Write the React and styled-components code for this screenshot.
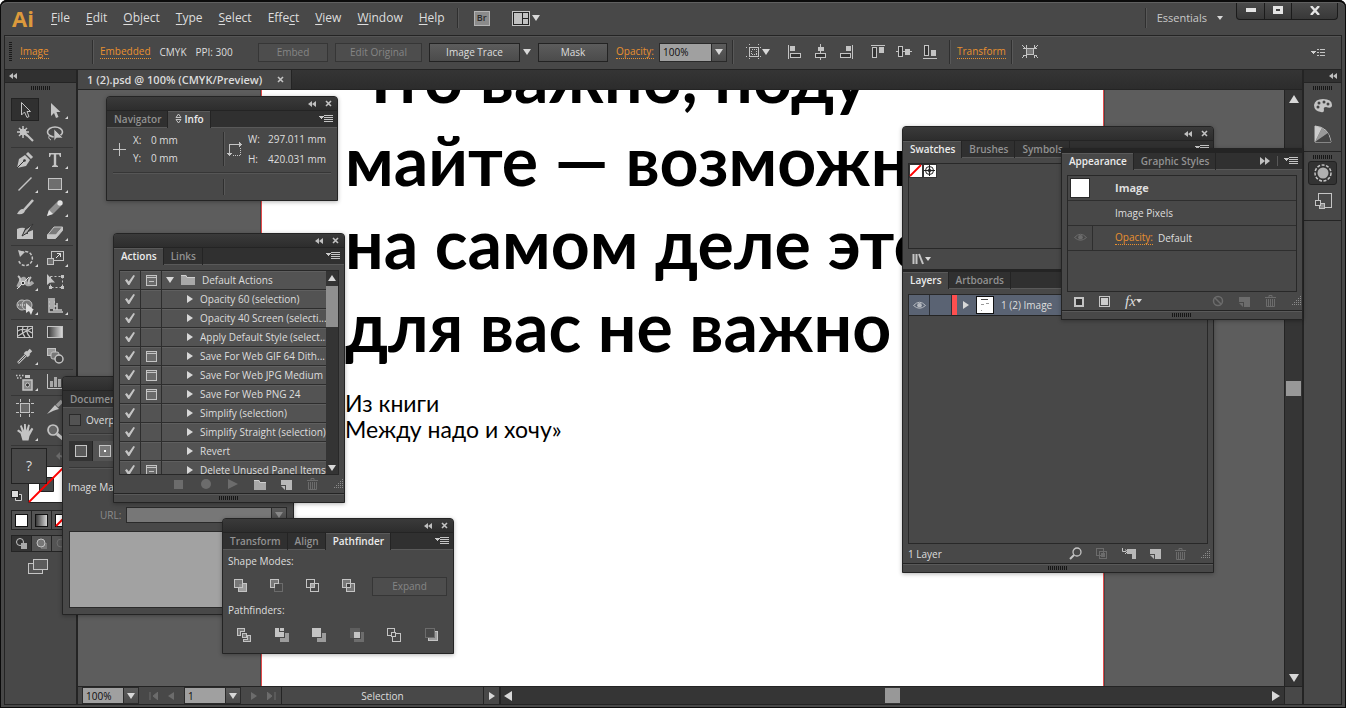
import React from "react";
import styled, { createGlobalStyle } from "styled-components";

const c = {
  base: "#484848",
  dark: "#303030",
  line: "#242424",
  soft: "#595959",
  text: "#dedede",
  dim: "#8c8c8c",
  off: "#6c6c6c",
  orange: "#e8902f",
  field: "#a0a0a0",
  icon: "#c4c4c4",
};

const GlobalStyle = createGlobalStyle`
  * { box-sizing: border-box; }
  body { margin: 0; background: #fff; }
  body, button, input, select, textarea {
    font-family: "Open Sans", "Noto Sans", sans-serif;
    font-size: 10px;
    line-height: 14px;
    color: ${c.text};
  }
  button { border: 0; padding: 0; background: none; cursor: pointer; white-space: nowrap; }
  svg { display: block; flex: none; }
`;

/* ---------- frame ---------- */

const Frame = styled.div`
  position: relative;
  display: flex;
  flex-direction: column;
  height: 100vh;
  min-height: 660px;
  padding: 3px 4px 3px;
  overflow: hidden;
  background: ${c.base};
  border-radius: 7px 7px 0 0;
  box-shadow: inset 0 0 0 1px #0b0b0b, inset 0 2px 0 #0b0b0b, inset 0 3px 0 #606060;
`;

const MenuBar = styled.header`
  display: flex;
  align-items: center;
  height: 32px;
  padding: 0 0 2px 8px;
`;

const Logo = styled.span`
  width: 31px;
  font-size: 22px;
  line-height: 28px;
  font-weight: 700;
  color: #dc9a3c;
`;

const MenuNav = styled.nav`
  display: flex;
  padding-right: 4px;
`;

const MenuButton = styled.button`
  padding: 4px 8px;
  font-size: 12px;
  line-height: 20px;
  u { text-underline-offset: 2px; }
`;

const Rule = styled.span`
  flex: none;
  width: 2px;
  height: ${(p) => p.$h || 20}px;
  background: linear-gradient(90deg, #2f2f2f 50%, #585858 50%);
`;

const MenuTools = styled.div`
  display: flex;
  align-items: center;
  gap: 22px;
  padding-left: 15px;
`;

const BridgeButton = styled.button`
  width: 16px;
  height: 15px;
  border: 1px solid #b4b4b4;
  background: #8b8b8b;
  color: #2a2a2a;
  font-size: 9px;
  line-height: 12px;
  font-weight: 600;
`;

const IconButton = styled.button`
  display: inline-flex;
  align-items: center;
  justify-content: center;
  gap: ${(p) => p.$gap || 0}px;
`;

const Grow = styled.span`
  flex: 1;
`;

const Workspaces = styled.button`
  display: flex;
  align-items: center;
  gap: 10px;
  padding: 0 13px 0 10px;
  font-size: 11px;
  line-height: 20px;
  color: #c9c9c9;
`;

const WindowButtons = styled.div`
  display: flex;
  align-self: flex-start;
  height: 17px;
  margin-right: 4px;
  border: 1px solid #1b1b1b;
  border-top: 0;
  border-radius: 0 0 4px 4px;
  background: linear-gradient(#4a4a4a, #383838);
`;

const WindowButton = styled.button`
  display: flex;
  align-items: center;
  justify-content: center;
  width: ${(p) => p.$w}px;
  padding-bottom: 2px;
  & + & { border-left: 1px solid #1b1b1b; }
`;

const Workspace = styled.div`
  flex: 1;
  min-height: 0;
  display: flex;
  flex-direction: column;
  border: 1px solid ${c.line};
`;

/* ---------- control bar ---------- */

const ControlBar = styled.div`
  display: flex;
  align-items: center;
  height: 34px;
  border-top: 1px solid #555;
  border-bottom: 1px solid ${c.line};
  padding: 0 16px 2px 4px;
`;

const Slot = styled.div`
  display: flex;
  align-items: center;
  flex: none;
  gap: ${(p) => p.$gap || 0}px;
  width: ${(p) => (p.$w ? p.$w + "px" : "auto")};
  padding-left: ${(p) => p.$pad || 0}px;
`;

const GripV = styled.span`
  width: 3px;
  height: 20px;
  background: repeating-linear-gradient(#1a1a1a 0 1px, transparent 1px 2px);
`;

const GripH = styled.span`
  width: 20px;
  height: 4px;
  background: repeating-linear-gradient(90deg, #161616 0 1px, transparent 1px 2px);
`;

const DottedLink = styled.a`
  color: ${c.orange};
  text-decoration: none;
  line-height: 13px;
  border-bottom: 1px dotted ${c.orange};
`;

const PushButton = styled.button`
  flex: none;
  width: ${(p) => p.$w}px;
  height: 19px;
  padding-bottom: 1px;
  border: 1px solid ${(p) => (p.disabled ? "#363636" : "#232323")};
  background: ${(p) => (p.disabled ? "#4d4d4d" : "linear-gradient(#5c5c5c, #4b4b4b)")};
  color: ${(p) => (p.disabled ? "#858585" : c.text)};
`;

const Combo = styled.span`
  display: flex;
  flex: none;
  width: ${(p) => p.$w}px;
  height: ${(p) => p.$h || 19}px;
  border: 1px solid #2a2a2a;
`;

const ComboSelect = styled.select`
  appearance: none;
  flex: 1;
  min-width: 0;
  border: 0;
  border-radius: 0;
  padding: 0 3px;
  background: ${(p) => (p.disabled ? "#777" : c.field)};
  color: #0c0c0c;
  opacity: 1;
`;

const ComboArrow = styled.span`
  display: flex;
  align-items: center;
  justify-content: center;
  width: 15px;
  border-left: 1px solid #2a2a2a;
  background: linear-gradient(#5c5c5c, #4b4b4b);
`;

/* ---------- main area ---------- */

const Main = styled.div`
  flex: 1;
  min-height: 0;
  display: flex;
`;

const Dock = styled.aside`
  flex: none;
  display: flex;
  flex-direction: column;
  width: ${(p) => p.$w}px;
  border-${(p) => p.$side}: 2px solid ${c.line};
`;

const DockHead = styled.div`
  display: flex;
  justify-content: ${(p) => (p.$right ? "flex-end" : "flex-start")};
  align-items: center;
  height: 13px;
  padding: 0 4px;
  background: ${c.dark};
  border-bottom: 1px solid ${c.line};
`;

const DockGrip = styled.div`
  display: flex;
  justify-content: center;
  align-items: center;
  height: 9px;
`;

const Tools = styled.div`
  padding: 6px 3px 0 6px;
`;

const ToolGroup = styled.div`
  display: grid;
  grid-template-columns: 30px 30px;
  grid-auto-rows: 24px;
  border-bottom: 1px solid #363636;
  padding-bottom: 1px;
`;

const ToolButton = styled.button`
  position: relative;
  display: flex;
  align-items: center;
  justify-content: center;
  width: 28px;
  height: 23px;
  background: ${(p) => (p.$on ? "#303030" : "none")};
  border: 1px solid ${(p) => (p.$on ? "#222" : "transparent")};
  &::after {
    content: "";
    position: absolute;
    right: 0;
    bottom: 1px;
    border-left: 3px solid transparent;
    border-bottom: 3px solid ${(p) => (p.$more ? "#d8d8d8" : "transparent")};
  }
`;

const SwatchPad = styled.div`
  padding: 2px 0 6px;
`;

const Strip3 = styled.div`
  display: flex;
  width: 61px;
  margin-bottom: 5px;
  border: 1px solid ${c.line};
`;

const StripButton = styled.button`
  display: flex;
  align-items: center;
  justify-content: center;
  flex: 1;
  height: ${(p) => p.$h}px;
  background: ${(p) => (p.$on ? "#333" : "#545454")};
  & + & { border-left: 1px solid ${c.line}; }
`;

const Doc = styled.main`
  flex: 1;
  min-width: 0;
  display: flex;
  flex-direction: column;
`;

const DocTabs = styled.div`
  display: flex;
  height: 20px;
  background: linear-gradient(#353535, #2c2c2c);
  border-bottom: 1px solid ${c.line};
`;

const DocTab = styled.button`
  display: flex;
  align-items: center;
  gap: 15px;
  padding: 0 7px 0 9px;
  background: ${c.base};
  border-right: 1px solid ${c.line};
  font-size: 11px;
  font-weight: 600;
  color: #dcdcdc;
`;

const CanvasRow = styled.div`
  flex: 1;
  min-height: 0;
  display: flex;
`;

const Canvas = styled.div`
  flex: 1;
  min-width: 0;
  overflow: hidden;
  background: #5d5d5d;
  padding-left: 183px;
`;

const Artboard = styled.article`
  width: 843px;
  height: 100%;
  overflow: hidden;
  background: #fff;
  border: solid #e34b4b;
  border-width: 0 1px;
  box-shadow: 0 0 0 1px #464646;
  padding-left: 83px;
  font-family: Lato, "Open Sans", sans-serif;
  color: #000;
  white-space: nowrap;
`;

const Headline = styled.h1`
  margin: -55px 0 23px;
  font-size: 68px;
  line-height: 83px;
  font-weight: 700;
`;

const Caption = styled.p`
  margin: 0;
  font-size: 23px;
  line-height: 26px;
`;

const ScrollTrack = styled.div`
  display: flex;
  flex-direction: ${(p) => (p.$h ? "row" : "column")};
  align-items: center;
  justify-content: space-between;
  ${(p) => (p.$h ? "flex: 1; min-width: 0; padding: 0 4px 0 3px;" : "width: 18px; padding: 5px 0 4px;")}
  background: #353535;
  border: solid ${c.line};
  border-width: ${(p) => (p.$h ? "0 1px" : "0 0 0 1px")};
`;

const Thumb = styled.span`
  width: 15px;
  height: 15px;
  background: #989898;
`;

const StatusBar = styled.footer`
  display: flex;
  height: 18px;
  border-top: 1px solid ${c.line};
`;

const StatusLeft = styled.div`
  display: flex;
  align-items: center;
  width: 204px;
  gap: 10px;
  padding-left: 4px;
  border-right: 1px solid ${c.line};
`;

const StatusText = styled.div`
  width: 202px;
  text-align: center;
  border-right: 1px solid ${c.line};
  line-height: 18px;
`;

const StatusMore = styled.button`
  display: flex;
  align-items: center;
  justify-content: center;
  width: 16px;
  border-right: 1px solid ${c.line};
`;

/* ---------- floating panels ---------- */

const Panel = styled.section`
  position: absolute;
  top: ${(p) => p.$top}px;
  ${(p) => (p.$right ? `right: ${p.$right}px;` : `left: ${p.$left}px;`)}
  width: ${(p) => p.$w}px;
  height: ${(p) => p.$h}px;
  display: flex;
  flex-direction: column;
  background: ${c.base};
  border: 1px solid ${c.line};
  border-radius: ${(p) => (p.$docked ? "0" : "4px 4px 0 0")};
  border-top-width: ${(p) => (p.$docked ? 4 : 1)}px;
  box-shadow: 0 1px 4px rgba(0, 0, 0, 0.3);
  white-space: nowrap;
`;

const PanelHead = styled.div`
  display: flex;
  align-items: center;
  justify-content: flex-end;
  gap: 9px;
  height: 13px;
  flex: none;
  padding-right: 5px;
  border-radius: 3px 3px 0 0;
  background: linear-gradient(#3a3a3a, #2d2d2d);
`;

const TabStrip = styled.div`
  display: flex;
  flex: none;
  height: 18px;
  align-items: stretch;
  background: ${c.dark};
  border-top: 1px solid ${c.line};
  box-shadow: inset 0 -1px 0 ${c.soft};
`;

const Tab = styled.button`
  display: flex;
  align-items: center;
  gap: 2px;
  padding: 0 6px 2px 7px;
  font-weight: 600;
  border-right: 1px solid ${c.line};
  background: ${(p) => (p.$on ? c.base : "none")};
  color: ${(p) => (p.$on ? "#ececec" : "#929292")};
  box-shadow: inset 0 ${(p) => (p.$on ? "1px" : "-1px")} 0 ${c.soft};
`;

const StripEnd = styled.div`
  display: flex;
  align-items: center;
  gap: 6px;
  margin-left: auto;
  padding: 0 4px 1px 0;
`;

const PanelFoot = styled.div`
  display: flex;
  justify-content: center;
  align-items: center;
  flex: none;
  height: 9px;
  border-top: 1px solid ${c.line};
  box-shadow: inset 0 1px 0 ${c.soft};
`;

const Bar = styled.div`
  display: flex;
  align-items: center;
  flex: none;
  height: ${(p) => p.$h || 18}px;
  gap: ${(p) => p.$gap || 0}px;
  padding: 0 ${(p) => p.$px || 0}px;
  justify-content: ${(p) => p.$justify || "flex-start"};
`;

const Well = styled.div`
  flex: 1;
  min-height: 0;
  display: flex;
  flex-direction: ${(p) => (p.$row ? "row" : "column")};
  margin: 5px 5px 0;
  border: 1px solid #282828;
  overflow: hidden;
`;

const HLine = styled.hr`
  width: 100%;
  height: 2px;
  margin: 0;
  border: 0;
  background: linear-gradient(#363636 50%, #565656 50%);
`;

/* info */
const InfoBody = styled.div`
  display: flex;
  flex-direction: column;
  gap: 5px;
  padding: 1px 6px;
`;

const InfoRow = styled.div`
  display: grid;
  grid-template-columns: 110px 4px 1fr;
  align-items: center;
  height: ${(p) => p.$h}px;
`;

const InfoCell = styled.div`
  display: flex;
  align-items: center;
  gap: 6px;
`;

const Facts = styled.dl`
  display: grid;
  grid-template-columns: ${(p) => p.$label}px auto;
  margin: 0;
  line-height: ${(p) => p.$lh}px;
  dt, dd { margin: 0; }
`;

/* actions */
const ActionTable = styled.div`
  flex: 1;
  min-width: 0;
  background: #535353;
`;

const ActionRow = styled.div`
  display: flex;
  height: 19px;
  border-bottom: 1px solid #2d2d2d;
  box-shadow: inset 0 1px 0 #5f5f5f;
`;

const ActionCell = styled.div`
  display: flex;
  align-items: center;
  justify-content: center;
  flex: none;
  width: 21px;
  border-right: 1px solid #2d2d2d;
`;

const ActionName = styled.div`
  display: flex;
  align-items: center;
  min-width: 0;
  gap: 7px;
  padding: 0 0 1px ${(p) => (p.$top ? 4 : 25)}px;
`;

const Tick = styled.input`
  appearance: none;
  width: 10px;
  height: 10px;
  margin: 0;
  background: ${c.icon};
  clip-path: polygon(0 52%, 18% 40%, 38% 66%, 84% 0, 100% 8%, 44% 100%, 32% 100%);
`;

const MiniScroll = styled.div`
  display: flex;
  flex-direction: column;
  align-items: center;
  width: 12px;
  padding: 4px 0 3px;
  background: #343434;
`;

const MiniThumb = styled.span`
  width: 12px;
  height: 41px;
  margin-top: 5px;
  margin-bottom: auto;
  background: #8f8f8f;
`;

/* document info */
const Box = styled.input`
  appearance: none;
  width: 12px;
  height: 12px;
  margin: 0;
  border: 1px solid #2a2a2a;
  background: #535353;
`;

const CheckLabel = styled.label`
  display: flex;
  align-items: center;
  gap: 5px;
`;

const FieldLabel = styled.label`
  width: 57px;
  padding-left: 31px;
  color: ${c.dim};
`;

const Notes = styled.textarea`
  flex: 1;
  margin: 5px 6px 6px;
  border: 1px solid #2a2a2a;
  background: #a2a2a2;
  resize: none;
`;

/* swatches, layers */
const SwatchArea = styled.div`
  flex: none;
  display: flex;
  flex-direction: column;
  height: 113px;
  border-bottom: 2px solid ${c.line};
`;

const SwatchGrid = styled.div`
  display: flex;
  align-items: flex-start;
`;

const LayerRow = styled.div`
  display: flex;
  align-items: center;
  height: 21px;
  background: #5a6373;
  border-bottom: 1px solid ${c.line};
`;

const LayerCell = styled.div`
  display: flex;
  align-items: center;
  justify-content: center;
  width: ${(p) => p.$w}px;
  height: 20px;
  border-right: 1px solid #2d3138;
`;

const LayerColor = styled.span`
  width: 5px;
  height: 20px;
  background: #ff4f4f;
`;

const LayerLabel = styled.div`
  display: flex;
  align-items: center;
  gap: 7px;
  padding-left: 6px;
`;

/* appearance */
const LookRow = styled.div`
  display: flex;
  align-items: center;
  flex: none;
  height: 25px;
  padding-bottom: 1px;
  border-bottom: 1px solid #2e2e2e;
`;

const LookCell = styled.div`
  display: flex;
  align-items: center;
  justify-content: center;
  width: 25px;
  height: 24px;
  margin-right: 22px;
  border-right: 1px solid ${(p) => (p.$line ? "#2e2e2e" : "transparent")};
`;

const White = styled.span`
  width: 20px;
  height: 20px;
  background: #fff;
  border: 1px solid #2a2a2a;
`;

const Strong = styled.strong`
  font-size: 11px;
  font-weight: 700;
`;

const Fx = styled.span`
  font-family: "Liberation Serif", serif;
  font-style: italic;
  font-size: 15px;
  line-height: 16px;
`;

const DockButton = styled.button`
  display: flex;
  align-items: center;
  justify-content: center;
  width: 29px;
  height: ${(p) => p.$h || 28}px;
  margin: 0 auto;
  border-radius: 3px;
  border: 1px solid ${(p) => (p.$on ? "#222" : "transparent")};
  background: ${(p) => (p.$on ? "#333" : "none")};
`;

const DockSection = styled.div`
  padding-bottom: 3px;
  border-bottom: 1px solid ${c.line};
`;

/* ---------- drawings ---------- */

const Svg = ({ w = 16, h = w, crisp, children }) => (
  <svg width={w} height={h} viewBox={`0 0 ${w} ${h}`} fill="none" stroke={c.icon} shapeRendering={crisp ? "crispEdges" : "auto"} aria-hidden="true">
    {children}
  </svg>
);

const Tri = ({ d = "down", w = 8, fill = "#d8d8d8" }) => {
  const h = w - 2;
  const half = w / 2;
  const pts = { down: `0,0 ${w},0 ${half},${h}`, up: `0,${h} ${w},${h} ${half},0`, right: `0,0 ${h},${half} 0,${w}`, left: `${h},0 0,${half} ${h},${w}` }[d];
  const flat = d === "down" || d === "up";
  return <Svg w={flat ? w : h} h={flat ? h : w}><polygon points={pts} fill={fill} stroke="none" /></Svg>;
};

const Double = ({ right, big }) => (
  <Svg w={big ? 10 : 8} h={big ? 8 : 6}>
    <path d={right ? "M0 0L5 4L0 8ZM5 0L10 4L5 8Z" : "M4 0L0 3L4 6ZM8 0L4 3L8 6Z"} fill="#c0c0c0" stroke="none" />
  </Svg>
);

const Cross = () => <Svg w={7}><path d="M1 1L6 6M6 1L1 6" strokeWidth="1.600" stroke="#c4c4c4" /></Svg>;

const Flyout = () => (
  <Svg w={14} h={8} crisp><path d="M0 1H5L2.500 4Z" fill="#c8c8c8" stroke="none" /><path d="M5 .5H14M5 2.500H14M5 4.500H14M5 6.500H14" /></Svg>
);

const Trash = ({ color = c.off }) => (
  <Svg w={11} h={12}><g stroke={color}><path d="M0 2.500H11M4 2V.5H7V2M1.500 4V11.500H9.500V4M3.500 4V11M5.500 4V11M7.500 4V11" /></g></Svg>
);

const Page = ({ color = "#b8b8b8" }) => <Svg w={11} h={11}><path d="M0 1H11V11H5V6H0Z" fill={color} stroke="none" /><path d="M0 7H4V11Z" fill={color} stroke="none" /></Svg>;

const Folder = ({ w = 14 }) => <Svg w={w} h={11}><path d={`M0 1H5L6 3H${w}V11H0Z`} fill="#a8a8a8" stroke="none" /><path d={`M0 1.500H5L6 3.500H${w}`} stroke="#cfcfcf" /></Svg>;

const Resize = () => (
  <Svg w={10} h={10} crisp>
    <path d="M9.500 0V10M7.500 2V10M5.500 4V10M3.500 6V10M1.500 8V10" stroke="#8a8a8a" strokeDasharray="1 1" />
  </Svg>
);

const Dialog = ({ dash }) => (
  <Svg w={11} h={11} crisp><rect x=".5" y=".5" width="10" height="10" fill="#6a6a6a" /><path d="M0 2.500H11" />{dash && <path d="M3 6.500H8" />}</Svg>
);

const Eye = ({ color = "#b6bac0" }) => (
  <Svg w={13} h={9}><path d="M.5 4.500Q6.500-2 12.500 4.500Q6.500 10 .5 4.500Z" stroke={color} /><circle cx="6.500" cy="4.300" r="2.300" fill={color} stroke="none" /></Svg>
);

const AlignIcon = ({ kind }) => {
  const shapes = {
    left: <><path d="M1.500 1V15" /><rect x="3" y="2" width="5" height="5" fill={c.icon} stroke="none" /><rect x="3.500" y="9.500" width="10" height="4" fill="#333" /></>,
    center: <><path d="M7.500 0V3M7.500 13V16M7.500 7V9" /><rect x="5" y="3" width="6" height="4" fill={c.icon} stroke="none" /><rect x="2.500" y="9.500" width="10" height="4" fill="#333" /></>,
    right: <><path d="M13.500 1V15" /><rect x="7" y="2" width="5" height="5" fill={c.icon} stroke="none" /><rect x="1.500" y="9.500" width="10" height="4" fill="#333" /></>,
    top: <><path d="M1 1.500H15" /><rect x="2.500" y="3.500" width="4" height="10" fill="#333" /><rect x="9" y="3" width="5" height="6" fill={c.icon} stroke="none" /></>,
    middle: <><path d="M0 7.500H3M7 7.500H10M14 7.500H16" /><rect x="2.500" y="2.500" width="4" height="10" fill="#333" /><rect x="9" y="5" width="5" height="6" fill={c.icon} stroke="none" /></>,
    bottom: <><path d="M1 14.500H15" /><rect x="2.500" y="1.500" width="4" height="10" fill="#333" /><rect x="9" y="6" width="5" height="6" fill={c.icon} stroke="none" /></>,
  };
  return <Svg crisp>{shapes[kind]}</Svg>;
};

const F = "#9c9c9c";
const PathIcon = ({ kind }) => {
  const a = { x: 0.5, y: 0.5, width: 8, height: 8 };
  const b = { x: 4.5, y: 4.5, width: 8, height: 8 };
  const shapes = {
    unite: <><rect {...b} fill={F} /><rect {...a} fill="#777" /><path d="M5 5H8V8H5Z" fill="#8a8a8a" stroke="none" /></>,
    minus: <><path d="M.5 .5H8.500V4.500H4.500V8.500H.5Z" fill="#777" /><path d="M9 4.500H12.500V12.500H4.500V9" stroke={c.off} /></>,
    intersect: <><rect {...a} /><rect {...b} /><path d="M5 5H8V8H5Z" fill={F} stroke="none" /></>,
    exclude: <><rect {...a} fill="#777" /><rect {...b} fill="#777" /><path d="M4.500 4.500H8.500V8.500H4.500Z" fill="#3b3b3b" /></>,
    divide: <><path d="M.5 .5H7.500V3.500H3.500V7.500H.5Z" fill="#777" /><rect x="5.500" y="5.500" width="4" height="4" fill="#777" /><path d="M10.500 7.500H13.500V13.500H6.500V11.500H10.500Z" fill="#777" /></>,
    trim: <><path d="M0 0H4V4H9V9H0Z" fill={c.icon} stroke="none" /><path d="M5 0H9V3H5Z" fill={c.icon} stroke="none" /><path d="M10 5H14V14H5V10H10Z" fill={F} stroke="none" /></>,
    merge: <><path d="M0 0H9V9H0Z" fill={c.icon} stroke="none" /><path d="M10 5H14V14H5V10H10Z" fill={F} stroke="none" /></>,
    crop: <><path d="M0 0H10V4H4V10H0Z" fill="#5e5e5e" stroke="none" /><path d="M11 4H14V14H4V11H11Z" fill="#6d6d6d" stroke="none" /><path d="M4 4H10V10H4Z" fill={c.icon} stroke="none" /></>,
    outline: <><path d="M5 7.500H.5V.5H7.500V4M9 5.500H13.500V13.500H5.500V9" /><rect x="4.500" y="4.500" width="4" height="4" /></>,
    back: <><path d="M9.500 3.500H12.500V12.500H3.500V9.500H9.500Z" fill={F} /><path d="M.5 9V.5H9V9Z" stroke={c.off} /></>,
  };
  return <Svg w={14} crisp>{shapes[kind]}</Svg>;
};

const toolArt = {
  select: <path d="M5.500 1.500V14L8.500 11L11 16.500L13 15.500L11 10.500H14.500Z" fill="#333" />,
  direct: <path d="M5 2V15L8 12L10 17L12.500 16L10.500 11H14.500Z" fill={c.icon} stroke="none" />,
  wand: <><path d="M9 8L17 16" strokeWidth="2.200" /><path d="M7 1V13M1 7H13M3 3L11 11M11 3L3 11" strokeWidth="1.500" /><circle cx="7" cy="7" r="3" fill={c.icon} /></>,
  lasso: <><ellipse cx="9" cy="7" rx="7.500" ry="5" strokeWidth="1.600" /><path d="M4 10Q1 13 5 15" /><path d="M8 4V16L10.500 13H17Z" fill={c.icon} stroke="#444" strokeWidth=".6" /></>,
  pen: <><path d="M1 17L3 8L9 4L14 9L10 15Z" fill={c.icon} stroke="none" /><path d="M1 17L8 10" stroke="#333" /><circle cx="8.500" cy="9.500" r="1.300" fill="#333" stroke="none" /><path d="M11 2L16 7" strokeWidth="3" /></>,
  type: <path d="M3 2H15V6H14L13 3.500H10.200V14L12 15V16H6V15L7.800 14V3.500H5L4 6H3Z" fill={c.icon} stroke="none" />,
  line: <path d="M2.500 15.500L15.500 2.500" strokeWidth="1.400" />,
  rect: <rect x="2.500" y="3.500" width="13" height="11" fill="#6e6e6e" />,
  brush: <><path d="M17 1L8 11" strokeWidth="2.600" /><path d="M1 15Q5 8 9 11Q9 16 1 15Z" fill={c.icon} stroke="none" /></>,
  pencil: <><path d="M1 17L3 11L11 3L15 7L7 15Z" fill="#8f8f8f" stroke="none" /><circle cx="14" cy="4" r="2.700" fill="#e2e2e2" stroke="none" /><path d="M1 17L3 11L7 15Z" fill="#e2e2e2" stroke="none" /></>,
  blob: <><path d="M1 6Q5 4 9 5L7 11H12V9L17 7V16H1Z" fill={c.icon} stroke="none" /><path d="M17 1L9 7L6 13L11 10Z" fill="#aaa" stroke="#333" /></>,
  eraser: <><path d="M1.500 12L8 4H16.500L10 12Z" fill="#7a7a7a" /><path d="M1.500 12V15.500H9.500L16.500 7.500V4L10 12Z" fill={c.icon} /></>,
  rotate: <><path d="M5 4A7 7 0 1 1 2.500 11" strokeDasharray="3 1.500" strokeWidth="1.500" /><path d="M2 1L9 3L4 8Z" fill={c.icon} stroke="none" /></>,
  scale: <><rect x="5.500" y="2.500" width="12" height="9" fill="#4a4a4a" /><rect x="1.500" y="9.500" width="6" height="6" fill="#707070" /><path d="M10 9L14.500 4.500M11 4.500H14.500V8" stroke="#e0e0e0" /></>,
  warp: <><path d="M2 14Q7 2 9 7Q11 15 17 9" strokeWidth="3.500" stroke="#a8a8a8" /><path d="M2 3Q5 5 4 9M15 4Q12 7 13 11" strokeWidth="2" /><path d="M1 16L13 4" stroke="#ddd" /><circle cx="7" cy="10" r="1.800" fill="#333" stroke="#eee" /></>,
  free: <><rect x="4.500" y="3.500" width="12" height="11" strokeDasharray="2 2" /><path d="M1 1V12L4 9.500H9Z" fill={c.icon} stroke="none" /><path d="M15 2H18V5H15ZM15 13H18V16H15ZM3 13H6V16H3Z" fill={c.icon} stroke="none" /></>,
  builder: <><circle cx="6" cy="8" r="5" fill="#777" /><circle cx="11" cy="8" r="5" fill="#777" /><path d="M2 8H12" strokeDasharray="1 1" stroke="#eee" /><path d="M10 6V16L13 14L15 18L17 13H18Z" fill="#ddd" stroke="none" /></>,
  grid: <><path d="M3 1V15H17M8 1V13M3 5H9M3 9H11M7 13H16M11 6V13" strokeWidth="1.500" /><path d="M4 1H8V12H4Z" fill="#aaa" stroke="none" /></>,
  mesh: <><rect x="1.500" y="3.500" width="15" height="11" fill="#333" /><path d="M2 8Q7 4 16 10M2 13Q8 9 16 5M7 4Q5 9 9 14M12 4Q9 9 14 14" strokeWidth="1.300" /></>,
  gradient: <><defs><linearGradient id="gr"><stop stopColor="#333" /><stop offset="1" stopColor="#ddd" /></linearGradient></defs><rect x="1.500" y="3.500" width="15" height="11" fill="url(#gr)" /></>,
  dropper: <><path d="M2 16L10 8" strokeWidth="2.500" /><path d="M2.500 15.500L10 8" stroke="#444" /><path d="M9 5L13 9M11 7L15 3" strokeWidth="3.500" /></>,
  blend: <><rect x="1.500" y="1.500" width="8" height="7" fill="#999" /><rect x="5" y="5" width="8" height="7" rx="2" fill="#777" /><circle cx="13" cy="12" r="4" fill="#444" strokeWidth="1.500" /></>,
  spray: <><path d="M0 2.500H8M1 5H7" strokeDasharray="1.500 1.500" strokeWidth="1.500" /><path d="M9 2H14V5H9Z" fill={c.icon} stroke="none" /><rect x="7" y="7" width="9" height="10" fill="#888" strokeWidth="1.500" /><circle cx="11.500" cy="12" r="2" fill="#333" /></>,
  graph: <><path d="M1.500 1V15.500H17" /><path d="M5.500 14V8M9.500 14V4M13.500 14V6" strokeWidth="3" stroke="#a8a8a8" /></>,
  artboard: <><rect x="4.500" y="4.500" width="9" height="9" fill="#6a6a6a" /><path d="M4.500 0V3M13.500 0V3M4.500 15V18M13.500 15V18M0 4.500H3M0 13.500H3M15 4.500H18M15 13.500H18" /></>,
  slice: <><path d="M1 15L9 6L13 10Q8 11 1 15Z" fill={c.icon} stroke="none" /><path d="M11 7L16 2" strokeWidth="3.500" stroke="#999" /></>,
  hand: <path d="M4.500 10.500L1 8L2.500 6.500L6 9L4 3L5.500 2L8 7.500V1H9.800L10.300 7.500L12.200 1.500L13.800 2L12.700 8.500L15.800 4.800L17.300 6L13.500 13L12.500 17.500H6.500Z" fill={c.icon} stroke="none" />,
  zoom: <><circle cx="7" cy="7" r="5" strokeWidth="1.700" fill="#666" /><path d="M11 11L17 16" strokeWidth="3" /></>,
};

const toolGroups = [
  [["select", 0], ["direct", 1], ["wand", 0], ["lasso", 0]],
  [["pen", 1], ["type", 1], ["line", 1], ["rect", 1], ["brush", 0], ["pencil", 1], ["blob", 0], ["eraser", 1]],
  [["rotate", 1], ["scale", 1], ["warp", 1], ["free", 0], ["builder", 1], ["grid", 1]],
  [["mesh", 0], ["gradient", 0], ["dropper", 1], ["blend", 0]],
  [["spray", 1], ["graph", 1]],
  [["artboard", 0], ["slice", 1], ["hand", 1], ["zoom", 0]],
];

const FillStroke = () => (
  <svg width="60" height="56" viewBox="0 0 60 56" aria-hidden="true">
    <path d="M45 8L49 4V7Q54 7 54 13H52Q52 9 49 9V12Z" fill="#6b6b6b" />
    <path d="M17.500 18.500H53.500V54.500H17.500Z" fill="#fff" stroke="#222" />
    <path d="M28.500 29.500H42.500V43.500H28.500Z" fill={c.base} stroke="#222" />
    <path d="M18 54L53 19" stroke="#f00" strokeWidth="1.800" />
    <rect x=".5" y=".5" width="35" height="35" fill={c.base} stroke="#222" />
    <text x="18" y="23" textAnchor="middle" fontSize="14" fill={c.text}>?</text>
    <path d="M4.500 46.500H10.500V52.500H4.500Z" fill="#333" stroke="#d0d0d0" />
    <path d="M.5 42.500H7.500V49.500H.5Z" fill="#ddd" stroke="#222" />
  </svg>
);

/* ---------- pieces ---------- */

const Head = () => (
  <PanelHead>
    <IconButton aria-label="Collapse"><Double /></IconButton>
    <IconButton aria-label="Close"><Cross /></IconButton>
  </PanelHead>
);

const Tabs = ({ names, on, icon, extra }) => (
  <TabStrip role="tablist">
    {names.map((n) => (
      <Tab key={n} role="tab" $on={n === on}>
        {icon && n === on && <Svg w={7} h={11}><path d="M1 4.500L3.500 1L6 4.500ZM1 6.500L3.500 10L6 6.500Z" /></Svg>}
        {n}
      </Tab>
    ))}
    <StripEnd>{extra}<IconButton aria-label="Panel menu"><Flyout /></IconButton></StripEnd>
  </TabStrip>
);

const actions = [
  ["Default Actions", "dash", true],
  ["Opacity 60 (selection)"],
  ["Opacity 40 Screen (selecti..."],
  ["Apply Default Style (select..."],
  ["Save For Web GIF 64 Dith...", "box"],
  ["Save For Web JPG Medium", "box"],
  ["Save For Web PNG 24", "box"],
  ["Simplify (selection)"],
  ["Simplify Straight (selection)"],
  ["Revert"],
  ["Delete Unused Panel Items", "dash"],
];

const menus = [["", "F", "ile"], ["", "E", "dit"], ["", "O", "bject"], ["", "T", "ype"], ["", "S", "elect"], ["Effe", "c", "t"], ["", "V", "iew"], ["", "W", "indow"], ["", "H", "elp"]];

const Picker = ({ id, label, value, w, h, off }) => (
  <Combo $w={w} $h={h}>
    <ComboSelect id={id} aria-label={label} disabled={off}><option>{value}</option></ComboSelect>
    <ComboArrow><Tri fill={off ? "#888" : undefined} /></ComboArrow>
  </Combo>
);

function Toolbox() {
  return (
    <Dock $w={73} $side="right">
      <DockHead><IconButton aria-label="Collapse tools"><Double /></IconButton></DockHead>
      <DockGrip><GripH /></DockGrip>
      <Tools>
        {toolGroups.map((g, i) => (
          <ToolGroup key={i}>
            {g.map(([name, more]) => (
              <ToolButton key={name} aria-label={name} $on={name === "select"} $more={more}><Svg w={18}>{toolArt[name]}</Svg></ToolButton>
            ))}
          </ToolGroup>
        ))}
        <SwatchPad><FillStroke /></SwatchPad>
        <Strip3>
          <StripButton $h={18} aria-label="Color"><Svg w={13} crisp><rect x=".5" y=".5" width="12" height="12" fill="#fff" stroke="#111" /></Svg></StripButton>
          <StripButton $h={18} aria-label="Gradient"><Svg w={13} crisp><rect x=".5" y=".5" width="12" height="12" fill="url(#gr)" stroke="#111" /></Svg></StripButton>
          <StripButton $h={18} aria-label="None"><Svg w={13}><rect x=".5" y=".5" width="12" height="12" fill="#fff" stroke="#111" /><path d="M1 12L12 1" stroke="#f00" strokeWidth="2" /></Svg></StripButton>
        </Strip3>
        <Strip3>
          <StripButton $h={15} $on aria-label="Draw normal"><Svg w={13}><circle cx="5" cy="5" r="3.500" /><path d="M6 6H12V12H6Z" fill="#aaa" stroke="none" /></Svg></StripButton>
          <StripButton $h={15} aria-label="Draw behind"><Svg w={13}><path d="M6 6H12V12H6Z" fill="#777" stroke="none" /><circle cx="6" cy="6" r="4" fill="#777" /></Svg></StripButton>
          <StripButton $h={15} aria-label="Draw inside"><Svg w={13}><circle cx="6" cy="6" r="4" stroke={c.off} /></Svg></StripButton>
        </Strip3>
        <Slot $pad={16}>
          <IconButton aria-label="Screen mode"><Svg w={22} h={20} crisp><rect x="1.500" y="6.500" width="14" height="10" fill="#555" /><rect x="6.500" y="2.500" width="14" height="10" fill="#5c5c5c" /></Svg></IconButton>
        </Slot>
      </Tools>
    </Dock>
  );
}

function RightDock() {
  return (
    <Dock $w={39} $side="left">
      <DockHead $right><IconButton aria-label="Expand panels"><Double /></IconButton></DockHead>
      <DockSection>
        <DockGrip><GripH /></DockGrip>
        <DockButton aria-label="Color"><Svg w={20} h={16}><path d="M10 1Q19 1 19 7Q19 11 13 9Q10 9 11 12Q11 15 8 14Q1 13 1 7Q2 1 10 1Z" fill={c.icon} stroke="none" /><g fill="#444" stroke="none"><circle cx="6" cy="5" r="1.500" /><circle cx="11" cy="4" r="1.500" /><circle cx="15" cy="6" r="1.500" /><circle cx="5" cy="9" r="1.500" /></g></Svg></DockButton>
        <DockButton aria-label="Color guide"><Svg w={18}><path d="M1 17V1Q15 2 17 17Z" fill="#666" /><path d="M1 17V1L8 3Z" fill="#ccc" stroke="none" /><path d="M1 17L8 3L14 8Z" fill="#999" stroke="none" /><path d="M1 17L14 8L17 17Z" fill="#444" stroke="none" /></Svg></DockButton>
      </DockSection>
      <DockSection>
        <DockGrip><GripH /></DockGrip>
        <DockButton $on $h={24} aria-label="Appearance"><Svg w={18}><circle cx="9" cy="9" r="8" strokeDasharray="3 1.500" strokeWidth="1.500" /><circle cx="9" cy="9" r="5.500" fill="#b0b0b0" stroke="none" /></Svg></DockButton>
        <DockButton $h={32} aria-label="Graphic styles"><Svg w={18} crisp><path d="M4.500 8V1.500H17.500V15.500H9" /><rect x="5.500" y="11.500" width="5" height="5" fill="#888" /><rect x="1.500" y="8.500" width="5" height="5" fill="#444" /></Svg></DockButton>
      </DockSection>
    </Dock>
  );
}

function InfoPanel() {
  return (
    <Panel $left={106} $top={96} $w={232} $h={105}>
      <Head />
      <Tabs names={["Navigator", "Info"]} on="Info" icon />
      <InfoBody>
        <InfoRow $h={38}>
          <InfoCell>
            <Svg w={14} crisp><path d="M6.500 1V14M0 7.500H13" /></Svg>
            <Facts $label={18} $lh={18}><dt>X:</dt><dd>0 mm</dd><dt>Y:</dt><dd>0 mm</dd></Facts>
          </InfoCell>
          <Rule $h={34} />
          <InfoCell>
            <Svg w={15} crisp><path d="M2.500 14V2.500H14" /><path d="M0 11H5L2.500 14ZM12 0V5L15 2.500Z" fill={c.icon} stroke="none" /><path d="M13.500 6V13.500H6" strokeDasharray="1 1" /></Svg>
            <Facts $label={20} $lh={20}><dt>W:</dt><dd>297.011 mm</dd><dt>H:</dt><dd>420.031 mm</dd></Facts>
          </InfoCell>
        </InfoRow>
        <HLine />
        <InfoRow $h={16}><span /><Rule $h={16} /><span /></InfoRow>
      </InfoBody>
    </Panel>
  );
}

function ActionsPanel() {
  return (
    <Panel $left={113} $top={233} $w={232} $h={270}>
      <Head />
      <Tabs names={["Actions", "Links"]} on="Actions" />
      <Well $row>
        <ActionTable>
          {actions.map(([name, box, top]) => (
            <ActionRow key={name}>
              <ActionCell><Tick type="checkbox" defaultChecked aria-label={`Include ${name}`} /></ActionCell>
              <ActionCell>{box && <Dialog dash={box === "dash"} />}</ActionCell>
              <ActionName $top={top}>
                <Tri d={top ? "down" : "right"} />
                {top && <Folder />}
                <span>{name}</span>
              </ActionName>
            </ActionRow>
          ))}
        </ActionTable>
        <MiniScroll><Tri d="up" /><MiniThumb /><Tri /></MiniScroll>
      </Well>
      <Bar $justify="flex-end" $gap={15} $px={1}>
        <Svg w={12}><rect x="1" y="2" width="9" height="9" fill={c.off} stroke="none" /></Svg>
        <Svg w={12}><circle cx="6" cy="6" r="5" fill={c.off} stroke="none" /></Svg>
        <Svg w={12}><path d="M1 1L11 6L1 11Z" fill={c.off} stroke="none" /></Svg>
        <Folder w={12} />
        <Page />
        <Trash />
        <Resize />
      </Bar>
      <PanelFoot><GripH /></PanelFoot>
    </Panel>
  );
}

function DocumentPanel() {
  return (
    <Panel $left={62} $top={376} $w={232} $h={239}>
      <Head />
      <Tabs names={["Document Info"]} />
      <Bar $h={24} $px={6}><CheckLabel><Box type="checkbox" />Overprint Fill</CheckLabel></Bar>
      <Bar $h={4} $px={6}><HLine /></Bar>
      <Bar $h={30} $px={6}>
        <StripButton $h={20} $on aria-label="Hide center"><Svg w={12} crisp><rect x=".5" y=".5" width="11" height="11" fill="#5a5a5a" /></Svg></StripButton>
        <StripButton $h={20} aria-label="Show center"><Svg w={12} crisp><rect x=".5" y=".5" width="11" height="11" fill="#777" /><path d="M5 5H7V7H5Z" fill="#fff" stroke="none" /></Svg></StripButton>
        <Slot $w={171} />
      </Bar>
      <Bar $h={4} $px={6}><HLine /></Bar>
      <Bar $h={34} $px={5}>Image Map:</Bar>
      <Bar $h={22} $px={6}>
        <FieldLabel htmlFor="map-url">URL:</FieldLabel>
        <Picker id="map-url" value="" w={161} h={16} off />
      </Bar>
      <Notes aria-label="Notes" />
    </Panel>
  );
}

function PathfinderPanel() {
  return (
    <Panel $left={222} $top={518} $w={232} $h={136}>
      <Head />
      <Tabs names={["Transform", "Align", "Pathfinder"]} on="Pathfinder" />
      <Bar $h={22} $px={5}>Shape Modes:</Bar>
      <Bar $h={28} $px={6} $justify="space-between">
        <Slot $gap={22} $pad={5}>
          {["unite", "minus", "intersect", "exclude"].map((k) => <IconButton key={k} aria-label={k}><PathIcon kind={k} /></IconButton>)}
        </Slot>
        <PushButton $w={75} disabled>Expand</PushButton>
      </Bar>
      <Bar $h={20} $px={5}>Pathfinders:</Bar>
      <Bar $h={30} $px={14} $justify="space-between">
        {["divide", "trim", "merge", "crop", "outline", "back"].map((k) => <IconButton key={k} aria-label={k}><PathIcon kind={k} /></IconButton>)}
      </Bar>
    </Panel>
  );
}

function LayersPanel() {
  return (
    <Panel $right={132} $top={126} $w={312} $h={447}>
      <Head />
      <Tabs names={["Swatches", "Brushes", "Symbols"]} on="Swatches" />
      <SwatchArea>
        <Well>
          <SwatchGrid>
            <Svg w={14}><rect x=".5" y=".5" width="13" height="13" fill="#fff" stroke="#333" /><path d="M1 12L12 1" stroke="#f00" strokeWidth="1.800" /></Svg>
            <Svg w={14}><rect x=".5" y=".5" width="13" height="13" fill="#fff" stroke="#333" /><g stroke="#222"><circle cx="6.500" cy="6.500" r="4" /><circle cx="6.500" cy="6.500" r="1.500" /><path d="M6.500 1V12M1 6.500H12" /></g></Svg>
          </SwatchGrid>
        </Well>
        <Bar $px={9} $h={20}><IconButton $gap={1} aria-label="Swatch libraries"><Svg w={12}><path d="M1.500 1V11M4.500 1V11" strokeWidth="2" /><path d="M7 1L11 11" strokeWidth="2" /></Svg><Tri w={6} /></IconButton></Bar>
      </SwatchArea>
      <Tabs names={["Layers", "Artboards"]} on="Layers" />
      <Well>
        <LayerRow>
          <LayerCell $w={21}><Eye /></LayerCell>
          <LayerCell $w={22} />
          <LayerColor />
          <LayerLabel>
            <Tri d="right" />
            <Svg w={18} crisp><rect x=".5" y=".5" width="17" height="17" fill="#fff" stroke="#111" /><path d="M5 3.500H12" stroke="#444" /><path d="M5 8.500H8M10 7.500H13M5 14.500H6" stroke="#999" /></Svg>
            1 (2) Image
          </LayerLabel>
        </LayerRow>
      </Well>
      <Bar $px={3} $h={19} $justify="space-between">
        <Slot $pad={2}>1 Layer</Slot>
        <Slot $gap={14}>
          <Svg w={13}><circle cx="8" cy="5" r="4" strokeWidth="1.300" /><path d="M5 8L1 12" strokeWidth="2" /></Svg>
          <Svg w={12} crisp><g stroke={c.off}><rect x=".5" y=".5" width="7" height="7" /><rect x="3.500" y="3.500" width="7" height="7" /><path d="M5 5H8V8H5Z" fill={c.off} /></g></Svg>
          <Svg w={14} h={11}><path d="M5 1H14V11H10V6H5Z" fill="#b8b8b8" stroke="none" /><path d="M.5 0V3.500H4M3 1.500L5.500 3.500L3 6" /></Svg>
          <Page />
          <Trash />
          <Resize />
        </Slot>
      </Bar>
      <PanelFoot><GripH /></PanelFoot>
    </Panel>
  );
}

function AppearancePanel() {
  return (
    <Panel $docked $right={43} $top={148} $w={242} $h={172}>
      <Tabs names={["Appearance", "Graphic Styles"]} on="Appearance" extra={<><IconButton aria-label="Collapse"><Double right big /></IconButton><Rule $h={10} /></>} />
      <Well>
        <LookRow><LookCell><White /></LookCell><Strong>Image</Strong></LookRow>
        <LookRow><LookCell />Image Pixels</LookRow>
        <LookRow><LookCell $line><Eye color={c.off} /></LookCell><Slot $gap={5}><DottedLink href="#opacity">Opacity:</DottedLink>Default</Slot></LookRow>
      </Well>
      <Bar $px={1} $justify="space-between">
        <Slot $gap={15} $pad={10}>
          <Svg w={11} crisp><rect x="1.500" y="1.500" width="8" height="8" strokeWidth="2" fill="#333" /></Svg>
          <Svg w={11} crisp><rect x=".5" y=".5" width="10" height="10" /><rect x="2" y="2" width="7" height="7" fill="#ccc" stroke="none" /></Svg>
          <IconButton aria-label="Add effect"><Fx>fx</Fx><Tri w={6} /></IconButton>
        </Slot>
        <Slot $gap={15}>
          <Svg w={12}><g stroke={c.off} strokeWidth="1.500"><circle cx="6" cy="6" r="4.500" /><path d="M3 3L9 9" /></g></Svg>
          <Page color={c.off} />
          <Trash />
          <Resize />
        </Slot>
      </Bar>
      <PanelFoot><GripH /></PanelFoot>
    </Panel>
  );
}

const aligns = (kinds) => kinds.map((k) => <IconButton key={k} aria-label={`Align ${k}`}><AlignIcon kind={k} /></IconButton>);

export default function App() {
  return (
    <Frame>
      <GlobalStyle />
      <MenuBar>
        <Logo>Ai</Logo>
        <MenuNav>{menus.map(([a, b, d]) => <MenuButton key={a + b + d}>{a}<u>{b}</u>{d}</MenuButton>)}</MenuNav>
        <Rule />
        <MenuTools>
          <BridgeButton>Br</BridgeButton>
          <IconButton $gap={2} aria-label="Arrange documents">
            <Svg w={18} h={15} crisp><rect x=".5" y=".5" width="17" height="14" fill="#222" /><path d="M2 2H10V13H2ZM11 2H16V7H11ZM11 8H16V13H11Z" fill="#c0c0c0" stroke="none" /></Svg>
            <Tri />
          </IconButton>
        </MenuTools>
        <Grow />
        <Rule />
        <Workspaces>Essentials<Tri w={6} /></Workspaces>
        <WindowButtons>
          <WindowButton $w={27} aria-label="Minimize"><Svg w={10} h={4} crisp><path d="M0 0H10V4H0Z" fill="#e4e4e4" stroke="none" /></Svg></WindowButton>
          <WindowButton $w={27} aria-label="Maximize"><Svg w={10} h={8} crisp><path d="M0 0H10V8H0ZM3 3V5H7V3Z" fill="#e4e4e4" fillRule="evenodd" stroke="none" /></Svg></WindowButton>
          <WindowButton $w={46} aria-label="Close"><Svg w={10} h={9}><path d="M1 0L9 9M9 0L1 9" stroke="#e4e4e4" strokeWidth="2.400" /></Svg></WindowButton>
        </WindowButtons>
      </MenuBar>

      <Workspace>
        <ControlBar>
          <Slot $w={83} $gap={8}><GripV /><DottedLink href="#image">Image</DottedLink></Slot>
          <Rule $h={24} />
          <Slot $w={164} $pad={6} $gap={9}><DottedLink href="#embedded">Embedded</DottedLink><span>CMYK</span><span>PPI: 300</span></Slot>
          <Slot $gap={7}>
            <PushButton $w={70} disabled>Embed</PushButton>
            <PushButton $w={87} disabled>Edit Original</PushButton>
            <PushButton $w={91}>Image Trace</PushButton>
          </Slot>
          <Slot $w={18} $pad={3}><IconButton aria-label="Tracing presets"><Tri /></IconButton></Slot>
          <PushButton $w={70}>Mask</PushButton>
          <Slot $w={51} $pad={8}><DottedLink href="#opacity">Opacity:</DottedLink></Slot>
          <Slot $w={73}><Picker label="Opacity" value="100%" w={68} /></Slot>
          <Rule $h={24} />
          <Slot $w={53} $pad={12}>
            <IconButton aria-label="Align to"><Svg crisp><rect x="3.500" y="3.500" width="9" height="9" /><rect x="5.500" y="5.500" width="5" height="5" strokeDasharray="1 1" /><path d="M3.500 0V2M12.500 0V2M3.500 14V16M12.500 14V16M0 3.500H2M0 12.500H2M14 3.500H16M14 12.500H16" strokeDasharray="1 1" /></Svg><Tri /></IconButton>
          </Slot>
          <Slot $w={83} $gap={10}>{aligns(["left", "center", "right"])}</Slot>
          <Slot $w={79} $gap={10}>{aligns(["top", "middle", "bottom"])}</Slot>
          <Rule $h={24} />
          <Slot $w={60} $pad={6}><DottedLink href="#transform">Transform</DottedLink></Slot>
          <Rule $h={24} />
          <Slot $pad={9}><IconButton aria-label="Isolate"><Svg crisp><rect x="4.500" y="4.500" width="7" height="6" fill="#777" /><path d="M0 1L3 4M1 4H4V1M16 1L13 4M15 4H12V1M0 14L3 11M1 11H4V14M16 14L13 11M15 11H12V14" /></Svg></IconButton></Slot>
          <Grow />
          <IconButton aria-label="Control menu"><Svg w={14} h={9} crisp><path d="M0 3H5L2.500 6Z" fill="#d0d0d0" stroke="none" /><path d="M6 1.500H8M9 1.500H14M6 4.500H8M9 4.500H14M6 7.500H8M9 7.500H14" /></Svg></IconButton>
        </ControlBar>

        <Main>
          <Toolbox />
          <Doc>
            <DocTabs><DocTab>1 (2).psd @ 100% (CMYK/Preview)<Cross /></DocTab></DocTabs>
            <CanvasRow>
              <Canvas>
                <Artboard>
                  <Headline>Что важно, поду<br />майте — возможно<br />на самом деле это<br />для вас не важно</Headline>
                  <Caption>Из книги<br />Между надо и хочу»</Caption>
                </Artboard>
              </Canvas>
              <ScrollTrack><Tri d="up" w={10} /><Thumb /><Tri w={10} /></ScrollTrack>
            </CanvasRow>
            <StatusBar>
              <StatusLeft>
                <Picker label="Zoom" value="100%" w={57} h={17} />
                <Svg w={9} h={8}><path d="M1 0V8M9 0L4 4L9 8Z" stroke={c.off} fill={c.off} /></Svg>
                <Tri d="left" fill={c.off} />
                <Picker label="Artboard" value="1" w={57} h={17} />
                <Tri d="right" fill={c.off} />
                <Svg w={9} h={8}><path d="M8 0V8M0 0L5 4L0 8Z" stroke={c.off} fill={c.off} /></Svg>
              </StatusLeft>
              <StatusText>Selection</StatusText>
              <StatusMore aria-label="Status menu"><Tri d="right" /></StatusMore>
              <ScrollTrack $h><Tri d="left" w={10} /><Thumb /><Tri d="right" w={10} /></ScrollTrack>
              <Slot $w={17} />
            </StatusBar>
          </Doc>
          <RightDock />
        </Main>
      </Workspace>

      <DocumentPanel />
      <InfoPanel />
      <ActionsPanel />
      <PathfinderPanel />
      <LayersPanel />
      <AppearancePanel />
    </Frame>
  );
}
